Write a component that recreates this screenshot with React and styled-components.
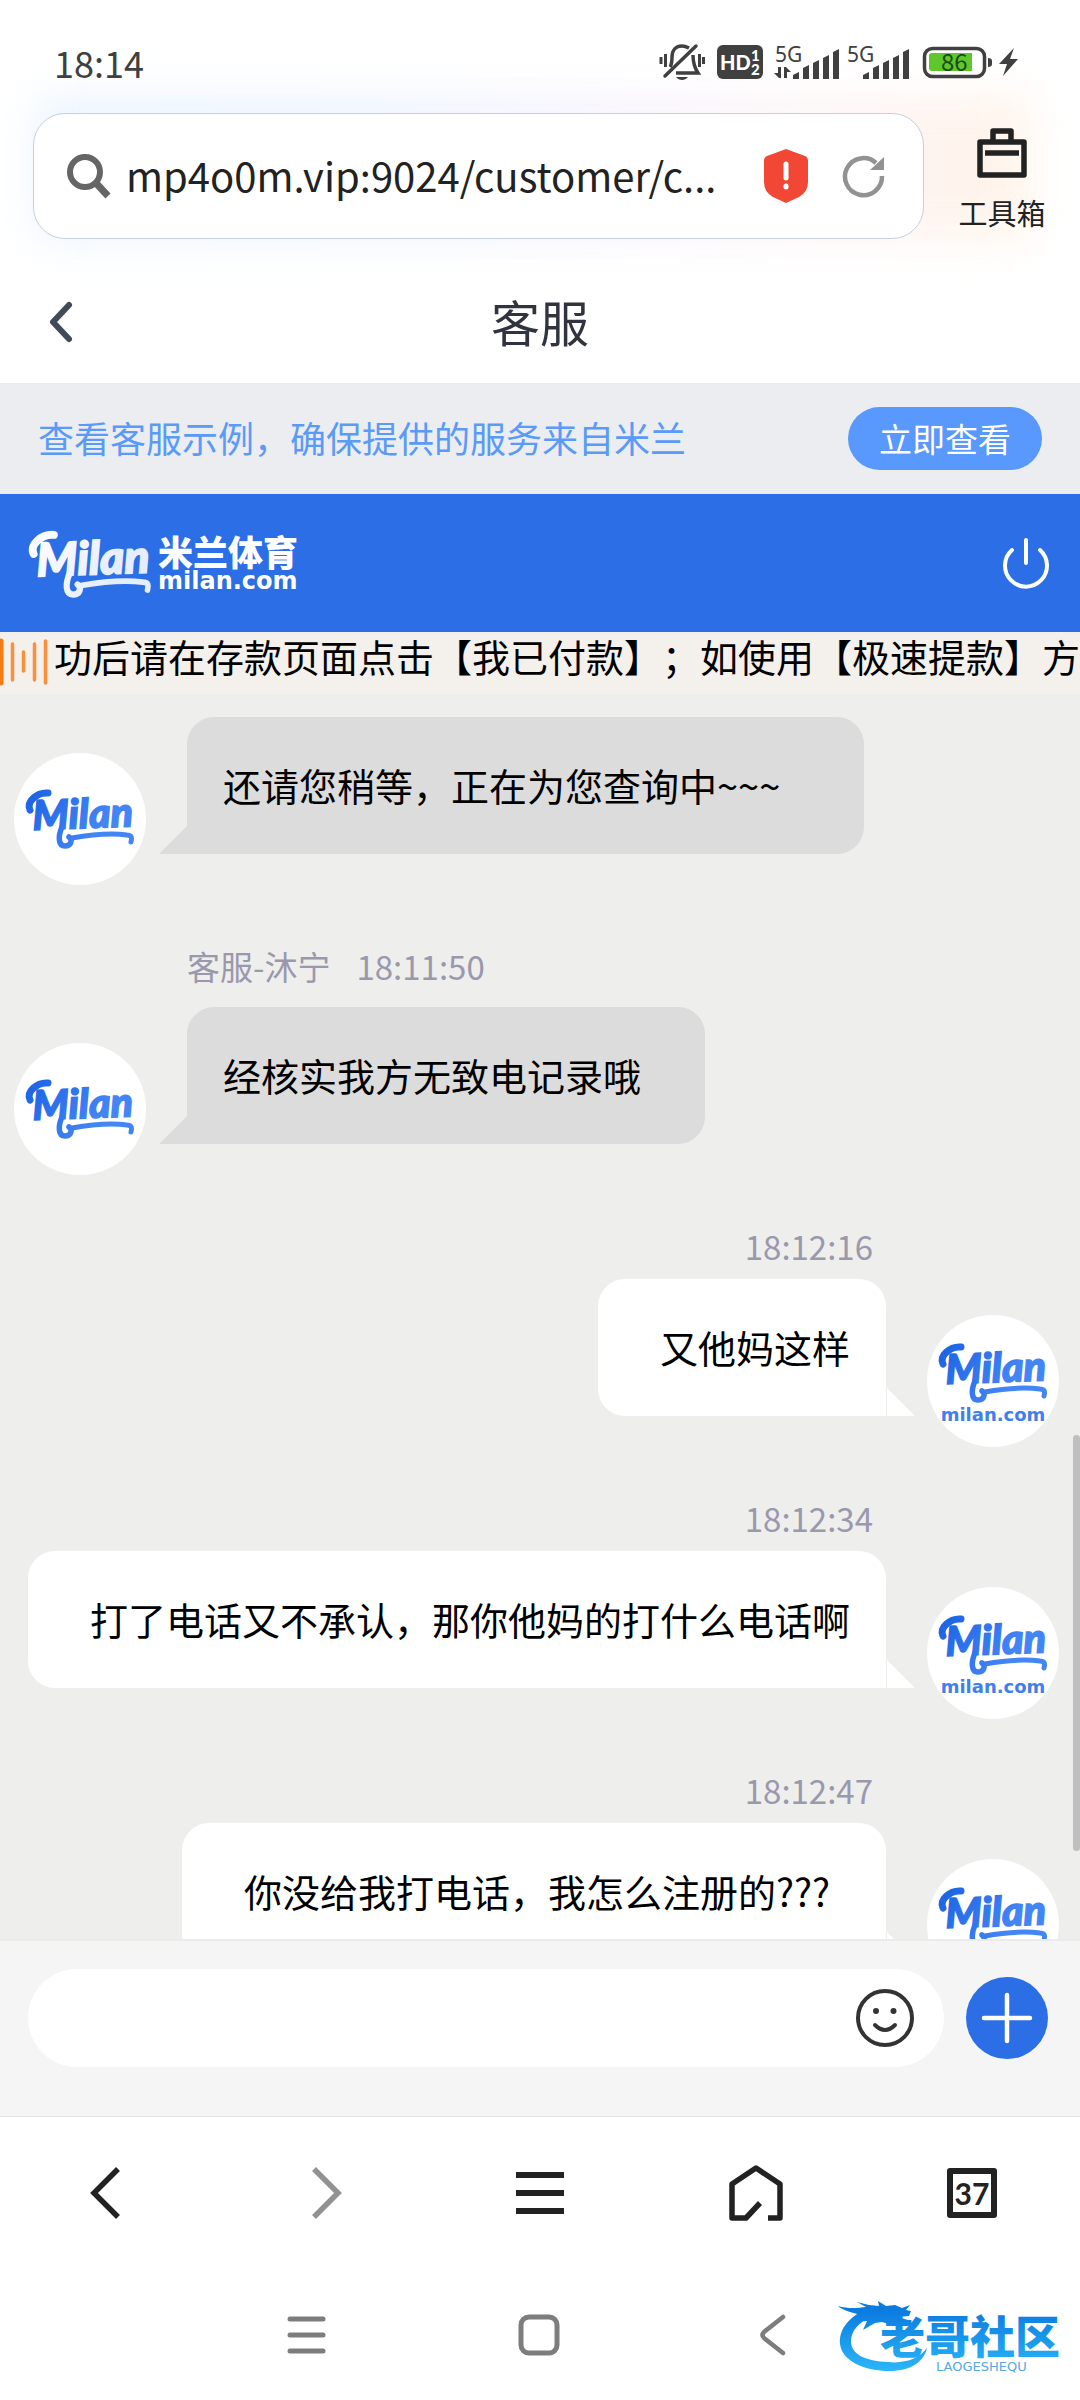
import React from "react";
import styled, { createGlobalStyle, css } from "styled-components";

const GlobalStyle = createGlobalStyle`
  *, *::before, *::after { box-sizing: border-box; }
  html, body { margin: 0; background: #fff; }
  body, button, input {
    font-family: "Noto Sans CJK SC", "Noto Sans", sans-serif;
    letter-spacing: normal;
  }
  body { text-spacing-trim: space-all; }
  button { border: 0; padding: 0; background: none; color: inherit; cursor: pointer; }
  svg { display: block; flex: none; overflow: visible; }
`;

const Screen = styled.div`
  display: flex;
  flex-direction: column;
  height: 100vh;
  overflow: hidden;
  background: #fff;
  color: #000;
`;

/* ---------- system status ---------- */

const StatusBar = styled.div`
  position: relative;
  z-index: 1;
  display: flex;
  flex: none;
  align-items: center;
  justify-content: space-between;
  height: 113px;
  padding: 11px 60px 0 54px;
  color: #404040;
`;

const Clock = styled.time`
  font-size: 36px;
  line-height: 50px;
`;

const StatusIcons = styled.div`
  display: flex;
  align-items: center;
  gap: 12px;
`;

const SignalGroup = styled.div`
  display: flex;
  gap: 6px;
`;

/* ---------- browser address ---------- */

const AddressRow = styled.div`
  position: relative;
  display: flex;
  flex: none;
  align-items: stretch;
  gap: 30px;
  height: 126px;
  padding: 0 30px 0 33px;

  &::before {
    content: "";
    position: absolute;
    inset: -18px 50px -2px 36px;
    background: linear-gradient(90deg, #e6f2ff, #e9f1ff 35%, #f5f0fd 60%, #fdf2f2 80%, #fff0e2);
    filter: blur(20px);
    opacity: 0.75;
  }
`;

const SearchBox = styled.label`
  position: relative;
  display: flex;
  flex: 1;
  min-width: 0;
  align-items: center;
  padding: 0 38px 0 33px;
  border: 1px solid #c6cfe0;
  border-radius: 32px;
  background: #fff;
`;

const UrlInput = styled.input`
  flex: 1;
  min-width: 0;
  margin: 0 36px 0 15px;
  padding: 0 0 2px;
  border: 0;
  outline: 0;
  background: none;
  color: #222;
  font-size: 40px;
  line-height: 60px;
`;

const ReloadButton = styled.button`
  margin-left: 35px;
`;

const ToolboxButton = styled.button`
  position: relative;
  display: flex;
  flex-direction: column;
  align-items: center;
  gap: 16px;
  width: 96px;
  padding-top: 15px;
  color: #222;
  font-size: 29px;
  line-height: 36px;
  white-space: nowrap;
`;

/* ---------- page header ---------- */

const TitleBar = styled.header`
  position: relative;
  display: grid;
  flex: none;
  grid-template-columns: 1fr auto 1fr;
  align-items: center;
  height: 144px;
  padding: 22px 50px 0;
  color: #30343f;
`;

const BackCell = styled.div`
  padding-top: 4px;
`;

const Title = styled.h1`
  margin: 0;
  padding-bottom: 2px;
  font-size: 49px;
  font-weight: 400;
  line-height: 72px;
`;

const Notice = styled.div`
  display: flex;
  flex: none;
  align-items: center;
  justify-content: space-between;
  height: 111px;
  padding: 0 38px;
  background: #ebedf1;
  color: #5a9af8;
  font-size: 36px;
  line-height: 54px;
`;

const NoticeText = styled.span`
  padding-bottom: 3px;
`;

const NoticeButton = styled.button`
  height: 63px;
  padding: 0 31px;
  border-radius: 32px;
  background: #5998fd;
  color: #fff;
  font-size: 33px;
  line-height: 63px;
`;

const BrandBar = styled.div`
  display: flex;
  flex: none;
  align-items: center;
  justify-content: space-between;
  height: 138px;
  padding: 0 31px 0 28px;
  background: #2b6ee6;
  color: #fff;
`;

const Brand = styled.div`
  display: flex;
  align-items: center;
  gap: 6px;
`;

const BrandNames = styled.div`
  display: flex;
  flex-direction: column;
`;

const BrandName = styled.span`
  font-size: 35px;
  font-weight: 900;
  line-height: 36px;
`;

const BrandDomain = styled.span`
  font-family: "DejaVu Sans", sans-serif;
  font-size: ${(p) => (p.$small ? 18 : 24)}px;
  font-weight: 700;
  line-height: 24px;
`;

const Marquee = styled.div`
  display: flex;
  flex: none;
  height: 62px;
  overflow: hidden;
  background: #f4f0ec;
`;

const MarqueeText = styled.div`
  display: flex;
  flex: 1;
  min-width: 0;
  overflow: hidden;
  font-size: 38px;
  line-height: 48px;
  white-space: nowrap;
`;

/* ---------- conversation ---------- */

const Chat = styled.main`
  position: relative;
  display: flex;
  flex: 1;
  flex-direction: column;
  gap: 48px;
  min-height: 0;
  overflow: hidden;
  padding-top: 23px;
  border-bottom: 2px solid #ebebea;
  background: #eeeeec;
`;

const ScrollThumb = styled.div`
  position: absolute;
  top: 741px;
  right: 0;
  width: 7px;
  height: 416px;
  border-radius: 4px;
  background: #bfbfbf;
`;

const Message = styled.article`
  flex: none;
`;

const Meta = styled.div`
  display: flex;
  gap: 26px;
  justify-content: ${(p) => (p.$own ? "flex-end" : "flex-start")};
  padding: ${(p) => (p.$own ? "0 207px 10px" : "10px 187px 18px")};
  color: #9a98ad;
  font-size: 33px;
  line-height: 46px;
`;

const MessageRow = styled.div`
  display: flex;
  align-items: flex-start;
  flex-direction: ${(p) => (p.$own ? "row-reverse" : "row")};
  gap: 41px;
  padding: ${(p) => (p.$own ? "0 21px 0 0" : "0 0 0 14px")};
`;

const Avatar = styled.div`
  display: flex;
  flex: none;
  flex-direction: column;
  align-items: center;
  width: 132px;
  height: 132px;
  margin-top: 36px;
  padding-top: ${(p) => (p.$own ? 26 : 34)}px;
  border-radius: 50%;
  background: #fff;
  color: #4180ec;
`;

const Bubble = styled.p`
  position: relative;
  margin: 0;
  font-size: 38px;
  line-height: 58px;
  border-radius: 27px;
  white-space: nowrap;

  &::after {
    content: "";
    position: absolute;
    bottom: 0;
    width: 28px;
    height: 28px;
  }

  ${(p) =>
    p.$own
      ? css`
          padding: 39px ${p.$roomy ? 56 : 36}px 40px 62px;
          border-bottom-right-radius: 0;
          background: #fff;
          &::after {
            left: calc(100% + 1px);
            background: #fff;
            clip-path: polygon(0 0, 100% 100%, 0 100%);
          }
        `
      : css`
          padding: 39px ${p.$roomy ? 84 : 64}px 40px 36px;
          border-bottom-left-radius: 0;
          background: #dcdcdc;
          &::after {
            right: 100%;
            background: #dcdcdc;
            clip-path: polygon(100% 0, 100% 100%, 0 100%);
          }
        `}
`;

/* ---------- composer ---------- */

const Composer = styled.form`
  display: flex;
  flex: none;
  align-items: center;
  gap: 22px;
  height: 176px;
  padding: 0 32px 21px 28px;
  border-bottom: 1px solid #e4e4e4;
  background: #f5f5f5;
`;

const ComposerField = styled.label`
  display: flex;
  flex: 1;
  align-items: center;
  height: 98px;
  padding: 0 30px 0 40px;
  border-radius: 49px;
  background: #fff;
`;

const ComposerInput = styled.input`
  flex: 1;
  min-width: 0;
  border: 0;
  outline: 0;
  background: none;
  font-size: 38px;
`;

const AddButton = styled.button`
  display: grid;
  place-items: center;
  width: 82px;
  height: 82px;
  border-radius: 50%;
  background: #2b6ee6;
`;

/* ---------- bottom navigation ---------- */

const BrowserNav = styled.nav`
  display: grid;
  flex: none;
  grid-template-columns: repeat(5, 1fr);
  height: 152px;
  color: #222;
`;

const NavButton = styled.button`
  display: grid;
  place-items: center;
  color: ${(p) => (p.disabled ? "#929292" : "inherit")};
`;

const TabCount = styled.span`
  display: grid;
  place-items: center;
  width: 50px;
  height: 50px;
  border: 6px solid #222;
  border-radius: 3px;
  font-family: Lato, sans-serif;
  font-size: 30px;
  font-weight: 700;
  line-height: 38px;
`;

const SystemNav = styled.nav`
  position: relative;
  display: grid;
  flex: none;
  grid-template-columns: repeat(3, 234px);
  justify-content: center;
  height: 131px;
  color: #7d7d7d;
`;

const Watermark = styled.div`
  position: absolute;
  right: 16px;
  bottom: 20px;
`;

/* ---------- drawings ---------- */

const BellOff = () => (
  <svg width="46" height="40" viewBox="0 0 46 40" fill="none" stroke="#404040" strokeWidth="3" role="img" aria-label="静音">
    <path d="M2 15v7M6.500 12v13M40.500 12v13M44.500 15v7" />
    <path d="M11 25c2-3 2-5 2-10C13 8 17 4 23 4c3 0 5 1 7 2M34 13c0 8 1 12 5 18H17" strokeWidth="3.500" />
    <path d="M6 34 37 4" strokeWidth="3.500" strokeLinecap="round" />
    <path d="M17 35h12c-3 4-9 4-12 0Z" fill="#404040" stroke="none" />
  </svg>
);

const HdBadge = () => (
  <svg width="46" height="34" viewBox="0 0 46 34" fontFamily="Lato, sans-serif" fontWeight="900" fill="#fff">
    <rect width="46" height="34" rx="6" fill="#404040" />
    <text x="3" y="25" fontSize="20">HD</text>
    <text x="34" y="16" fontSize="15">1</text>
    <text x="34" y="30" fontSize="15">2</text>
  </svg>
);

const Signal = ({ data }) => {
  const x = data ? 18 : 16;
  const width = data ? 66 : 64;
  const heights = [7, 14, 19, 24, 30];
  return (
    <svg width={width} height="36" viewBox={`0 0 ${width} 36`} fill="#404040">
      <text x="0" y="18" fontSize="21" fontFamily="Noto Sans, sans-serif">5G</text>
      {data && <path d="M6 23v11H4l-5-5h4v-6zM9 34V23h2l5 5h-4v6z" />}
      {heights.map((h, i) => (
        <path key={h} d={`M${x + i * 10} ${35 - h + 3}l6-3v${h}h-6z`} />
      ))}
    </svg>
  );
};

const Battery = () => (
  <svg width="97" height="32" viewBox="0 0 97 32">
    <rect x="1.500" y="2.500" width="60" height="28" rx="8" fill="none" stroke="#404040" strokeWidth="3.500" />
    <path d="M6 10q0-3 3-3h40v18H9q-3 0-3-3z" fill="#5fc72b" />
    <path d="M65 12q4 0 4 3v3q0 3-4 3z" fill="#404040" />
    <text x="18" y="25" fontSize="24" fontFamily="Noto Sans CJK SC, sans-serif" fill="#1d4a12">86</text>
    <path d="M91 2 76 18h8l-4 12 15-17h-8z" fill="#404040" />
  </svg>
);

const SearchIcon = () => (
  <svg width="44" height="44" viewBox="0 0 44 44" fill="none" stroke="#656565">
    <circle cx="18" cy="18" r="15" strokeWidth="6" />
    <path d="m28 28 13 14" strokeWidth="7" />
  </svg>
);

const ShieldIcon = () => (
  <svg width="44" height="54" viewBox="0 0 44 54" role="img" aria-label="不安全">
    <path d="M22 0 41 7q3 1 3 5v21q0 10-9 15L22 54 9 48Q0 43 0 33V12q0-4 3-5Z" fill="#f24734" />
    <path d="M22 15v14M22 37v1" stroke="#fff" strokeWidth="5" strokeLinecap="round" />
  </svg>
);

const ReloadIcon = () => (
  <svg width="42" height="44" viewBox="0 0 42 44" fill="none">
    <path d="M39 22A18.500 18.500 0 1 1 33 9" stroke="#929292" strokeWidth="4.500" />
    <path d="M41 3v13H27z" fill="#929292" />
  </svg>
);

const ToolboxIcon = () => (
  <svg width="50" height="50" viewBox="0 0 50 50" fill="none" stroke="#222" strokeWidth="5.500" strokeLinejoin="round">
    <rect x="3" y="14" width="44" height="33" />
    <path d="M16 14V3h18v11M8 25h34" />
  </svg>
);

const TitleBack = () => (
  <svg width="22" height="40" viewBox="0 0 22 40" fill="none" stroke="#424957" strokeWidth="6" strokeLinecap="round" strokeLinejoin="round">
    <path d="M19 3 3 20l16 17" />
  </svg>
);

const MilanLogo = ({ light, width = 110 }) => {
  const id = light ? "milan-light" : "milan-blue";
  const paint = `url(#${id})`;
  return (
    <svg width={width} height={Math.round((width * 62) / 110)} viewBox="0 0 110 62">
      <defs>
        <linearGradient id={id} gradientUnits="userSpaceOnUse" x1="0" y1="10" x2="60" y2="60">
          <stop offset="0" stopColor={light ? "#ffffff" : "#1b63e4"} />
          <stop offset="1" stopColor={light ? "#e6edfc" : "#4485f5"} />
        </linearGradient>
      </defs>
      <text
        x="8"
        y="43"
        fontSize="41"
        fontFamily="Lato, sans-serif"
        fontStyle="italic"
        fontWeight="900"
        fill={paint}
        stroke={paint}
        strokeWidth="1.5"
        transform="rotate(-2 8 43)"
      >
        Milan
      </text>
      <g fill="none" stroke={paint} strokeLinecap="round">
        <path d="M5 23C1 15 12 5 23 6" strokeWidth="7" />
        <path d="M37 40c-4 9-4 19 3 19 6 0 8-6 4-9" strokeWidth="5.500" />
        <path d="M47 51C64 48 86 46 102 48c5 0 5 3 4 7" strokeWidth="5" />
      </g>
    </svg>
  );
};

const PowerIcon = () => (
  <svg width="46" height="50" viewBox="0 0 46 50" fill="none" stroke="#fff" strokeWidth="4" strokeLinecap="round">
    <path d="M23 2v23M9 12a21 21 0 1 0 28 0" />
  </svg>
);

const SoundBars = () => (
  <svg width="54" height="62" viewBox="0 0 54 62" stroke="#fb8f3c" strokeWidth="3.500" strokeLinecap="round">
    <path d="M1 9v42" stroke="#f97a12" strokeWidth="5" />
    <path d="M12.500 12v36M23.500 20v19M34.500 12v36M45.500 9v42" />
  </svg>
);

const SmileIcon = () => (
  <svg width="58" height="58" viewBox="0 0 58 58" fill="none" stroke="#333" strokeWidth="4" strokeLinecap="round">
    <circle cx="29" cy="29" r="27" />
    <path d="M19 36q10 10 20 0" />
    <circle cx="20" cy="22" r="3" fill="#333" stroke="none" />
    <circle cx="37.500" cy="22" r="3" fill="#333" stroke="none" />
  </svg>
);

const PlusIcon = () => (
  <svg width="50" height="50" viewBox="0 0 50 50" stroke="#fff" strokeWidth="4.500" strokeLinecap="round">
    <path d="M25 2v46M2 25h46" />
  </svg>
);

const Chevron = ({ right }) => (
  <svg width="38" height="52" viewBox="0 0 38 52" fill="none" stroke="currentColor" strokeWidth="5.500">
    <path d={right ? "M9 2 33 26 9 50" : "M29 2 5 26l24 24"} />
  </svg>
);

const MenuIcon = () => (
  <svg width="48" height="44" viewBox="0 0 48 44" stroke="currentColor" strokeWidth="6">
    <path d="M0 4h48M0 22h48M0 40h48" />
  </svg>
);

const HomeIcon = () => (
  <svg width="54" height="56" viewBox="0 0 54 56" fill="none" stroke="currentColor" strokeWidth="5.500" strokeLinejoin="round">
    <path d="M39 53h12V19L27 3 3 19v34h14l14-15" />
  </svg>
);

const RecentIcon = () => (
  <svg width="40" height="40" viewBox="0 0 40 40" stroke="currentColor" strokeWidth="5" strokeLinecap="round">
    <path d="M4 4h33M4 20h33M4 36h33" />
  </svg>
);

const SquareIcon = () => (
  <svg width="42" height="42" viewBox="0 0 42 42" fill="none" stroke="currentColor" strokeWidth="5">
    <rect x="2" y="3" width="36" height="36" rx="8" />
  </svg>
);

const SystemBack = () => (
  <svg width="28" height="42" viewBox="0 0 28 42" fill="none" stroke="currentColor" strokeWidth="4.500" strokeLinecap="round">
    <path d="M23 3 4 18q-3 3 0 6l19 15" />
  </svg>
);

const CommunityLogo = () => (
  <svg width="226" height="80" viewBox="0 0 226 80" role="img" aria-label="老哥社区">
    <defs>
      <linearGradient id="wave" gradientUnits="userSpaceOnUse" x1="0" y1="10" x2="0" y2="72">
        <stop offset="0" stopColor="#0b7be0" />
        <stop offset="1" stopColor="#2bb8f8" />
      </linearGradient>
    </defs>
    <g fill="url(#wave)">
      <path d="M28 9C8 19 1 31 2 44c2 17 24 27 50 27 20 0 34-9 37-23-7 10-22 16-39 14C28 61 13 55 13 41c0-10 8-19 21-25Z" />
      <path d="M0 6c10 3 20 2 28 1l-9-5 12 3 10 1-1-5 8 5 9-1 7 3 8-3-4 5 5 1-2 5-11 1 10 3-5 4-13-3 2 4-10-3-7 1-12 7 4-9-11 1 8-6C14 12 5 11 0 6Z" />
      <text x="42" y="54" fontSize="45" fontWeight="900" fontFamily="Noto Sans CJK SC, sans-serif">老哥社区</text>
    </g>
    <text x="98" y="71" fontSize="13" fontFamily="DejaVu Sans, sans-serif" fill="#55a9e4">LAOGESHEQU</text>
  </svg>
);

/* ---------- data ---------- */

const messages = [
  { text: "还请您稍等，正在为您查询中~~~", roomy: true },
  { name: "客服-沐宁", time: "18:11:50", text: "经核实我方无致电记录哦" },
  { own: true, time: "18:12:16", text: "又他妈这样" },
  { own: true, time: "18:12:34", text: "打了电话又不承认，那你他妈的打什么电话啊" },
  { own: true, time: "18:12:47", text: "你没给我打电话，我怎么注册的???", roomy: true },
];

export default function App() {
  return (
    <Screen>
      <GlobalStyle />
      <StatusBar>
        <Clock>18:14</Clock>
        <StatusIcons>
          <BellOff />
          <HdBadge />
          <SignalGroup>
            <Signal data />
            <Signal />
          </SignalGroup>
          <Battery />
        </StatusIcons>
      </StatusBar>

      <AddressRow>
        <SearchBox>
          <SearchIcon />
          <UrlInput aria-label="网址" defaultValue="mp4o0m.vip:9024/customer/c..." />
          <ShieldIcon />
          <ReloadButton type="button" aria-label="刷新">
            <ReloadIcon />
          </ReloadButton>
        </SearchBox>
        <ToolboxButton type="button">
          <ToolboxIcon />
          工具箱
        </ToolboxButton>
      </AddressRow>

      <TitleBar>
        <BackCell>
          <button type="button" aria-label="返回">
            <TitleBack />
          </button>
        </BackCell>
        <Title>客服</Title>
      </TitleBar>

      <Notice>
        <NoticeText>查看客服示例，确保提供的服务来自米兰</NoticeText>
        <NoticeButton type="button">立即查看</NoticeButton>
      </Notice>

      <BrandBar>
        <Brand>
          <MilanLogo light width={124} />
          <BrandNames>
            <BrandName>米兰体育</BrandName>
            <BrandDomain>milan.com</BrandDomain>
          </BrandNames>
        </Brand>
        <button type="button" aria-label="退出">
          <PowerIcon />
        </button>
      </BrandBar>

      <Marquee>
        <SoundBars />
        <MarqueeText>功后请在存款页面点击【我已付款】；如使用【极速提款】方</MarqueeText>
      </Marquee>

      <Chat>
        {messages.map((m) => (
          <Message key={m.text}>
            {m.time && (
              <Meta $own={m.own}>
                {m.name && <span>{m.name}</span>}
                <time>{m.time}</time>
              </Meta>
            )}
            <MessageRow $own={m.own}>
              <Avatar $own={m.own}>
                <MilanLogo />
                {m.own && <BrandDomain $small>milan.com</BrandDomain>}
              </Avatar>
              <Bubble $own={m.own} $roomy={m.roomy}>{m.text}</Bubble>
            </MessageRow>
          </Message>
        ))}
        <ScrollThumb />
      </Chat>

      <Composer onSubmit={(e) => e.preventDefault()}>
        <ComposerField>
          <ComposerInput aria-label="消息" />
          <button type="button" aria-label="表情">
            <SmileIcon />
          </button>
        </ComposerField>
        <AddButton type="button" aria-label="添加">
          <PlusIcon />
        </AddButton>
      </Composer>

      <BrowserNav aria-label="浏览器">
        <NavButton type="button" aria-label="后退"><Chevron /></NavButton>
        <NavButton type="button" aria-label="前进" disabled><Chevron right /></NavButton>
        <NavButton type="button" aria-label="菜单"><MenuIcon /></NavButton>
        <NavButton type="button" aria-label="主页"><HomeIcon /></NavButton>
        <NavButton type="button" aria-label="标签页"><TabCount>37</TabCount></NavButton>
      </BrowserNav>

      <SystemNav aria-label="系统">
        <NavButton type="button" aria-label="最近任务"><RecentIcon /></NavButton>
        <NavButton type="button" aria-label="桌面"><SquareIcon /></NavButton>
        <NavButton type="button" aria-label="返回"><SystemBack /></NavButton>
        <Watermark>
          <CommunityLogo />
        </Watermark>
      </SystemNav>
    </Screen>
  );
}
